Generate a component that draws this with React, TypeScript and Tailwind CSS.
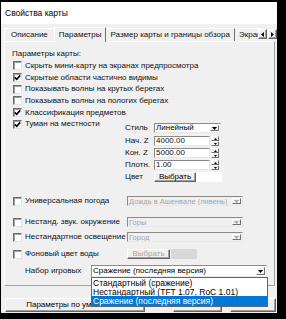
import React from "react";

// classic win32 bits
function Check({ checked }: { checked?: boolean }) {
  return (
    <span className="w-[9px] h-[9px] shrink-0 bg-white border border-t-[#6b6b6b] border-l-[#6b6b6b] border-b-[#e3e3e3] border-r-[#e3e3e3] shadow-[inset_1px_1px_0_#a0a0a0] flex items-center justify-center">
      {checked && (
        <svg width="7" height="7" viewBox="0 0 7 7">
          <path d="M0.8 3.4 L2.7 5.3 L6.2 1.4" stroke="#000" strokeWidth="1.6" fill="none" />
        </svg>
      )}
    </span>
  );
}

function Arrow({ disabled }: { disabled?: boolean }) {
  return (
    <span className="w-[9px] h-full shrink-0 bg-[#f0f0f0] border border-t-white border-l-white border-b-[#707070] border-r-[#707070] flex items-center justify-center">
      <svg width="5" height="3" viewBox="0 0 5 3">
        <path d="M0 0 H5 L2.5 3 Z" fill={disabled ? "#a8a8a8" : "#000"} />
      </svg>
    </span>
  );
}

function Select({ value, width, disabled, h = "h-[10px]" }: { value: string; width: string; disabled?: boolean; h?: string }) {
  return (
    <div
      className={`${width} ${h} flex items-stretch border border-t-[#8a8a8a] border-l-[#8a8a8a] border-b-[#e8e8e8] border-r-[#e8e8e8] ${
        disabled ? "bg-[#f0f0f0] text-[#a6a6a6] text-[7.5px]" : "bg-white text-black"
      }`}
    >
      <span className="flex-1 flex items-center pl-[1px] whitespace-nowrap overflow-hidden leading-none">{value}</span>
      <div className="p-[1px] flex">
        <Arrow disabled={disabled} />
      </div>
    </div>
  );
}

function Spin({ value }: { value: string }) {
  return (
    <div className="flex items-center gap-[1px] h-[10px]">
      <div className="w-[56px] h-full bg-white border border-t-[#8a8a8a] border-l-[#8a8a8a] border-b-[#e8e8e8] border-r-[#e8e8e8] flex items-center pl-[1px] leading-none">
        {value}
      </div>
      <div className="w-[8px] h-full flex flex-col">
        <span className="flex-1 bg-[#f0f0f0] border border-t-white border-l-white border-b-[#707070] border-r-[#707070] flex items-center justify-center">
          <svg width="3" height="2" viewBox="0 0 3 2">
            <path d="M0 2 H3 L1.5 0 Z" fill="#000" />
          </svg>
        </span>
        <span className="flex-1 bg-[#f0f0f0] border border-t-white border-l-white border-b-[#707070] border-r-[#707070] flex items-center justify-center">
          <svg width="3" height="2" viewBox="0 0 3 2">
            <path d="M0 0 H3 L1.5 2 Z" fill="#000" />
          </svg>
        </span>
      </div>
    </div>
  );
}

function Btn({ children, className = "", disabled }: { children?: React.ReactNode; className?: string; disabled?: boolean }) {
  return (
    <div
      className={`bg-[#f0f0f0] border border-t-white border-l-white border-b-[#646464] border-r-[#646464] shadow-[inset_-1px_-1px_0_#a0a0a0] flex items-center justify-center leading-none whitespace-nowrap ${
        disabled ? "text-[#a6a6a6]" : "text-black"
      } ${className}`}
    >
      {children}
    </div>
  );
}

function Row({ checked, label, h = "h-[11.7px]" }: { checked?: boolean; label: string; h?: string }) {
  return (
    <div className={`${h} flex items-center gap-[3px] pl-[8px]`}>
      <Check checked={checked} />
      <span className="whitespace-nowrap leading-none">{label}</span>
    </div>
  );
}

const checks = [
  { label: "Скрыть мини-карту на экранах предпросмотра", checked: false },
  { label: "Скрытые области частично видимы", checked: true },
  { label: "Показывать волны на крутых берегах", checked: false },
  { label: "Показывать волны на пологих берегах", checked: false },
  { label: "Классификация предметов", checked: true },
];

export default function App() {
  return (
    <div className="w-[286px] h-[319px] bg-black pt-[2px] pl-[1px] overflow-hidden font-['Liberation_Sans',Arial,sans-serif] text-[8px] text-[#111]">
      <div className="w-[276px] h-[311px] bg-[#f0f0f0] flex flex-col">
        {/* заголовок окна */}
        <div className="h-[22px] bg-white flex items-center pl-[4px] text-[8.5px] text-black">Свойства карты</div>

        {/* вкладки */}
        <div className="h-[17px] flex items-end pl-[3px] relative">
          <div className="h-[13px] flex items-center px-[6px] border-l border-t border-white">Описание</div>
          <div className="h-[15px] flex items-center px-[4px] bg-[#f0f0f0] border-l border-t border-white border-r border-r-[#6d6d6d] -mb-[1px] z-10">
            Параметры
          </div>
          <div className="h-[13px] flex items-center px-[4px] border-t border-white border-r border-r-[#6d6d6d]">
            Размер карты и границы обзора
          </div>
          <div className="h-[13px] flex items-center pl-[4px] w-[26px] overflow-hidden whitespace-nowrap border-t border-white">
            Экран
          </div>
          <div className="flex gap-[1px] mb-[2px] ml-[-3px]">
            <Btn className="w-[9px] h-[10px]">
              <svg width="3" height="5" viewBox="0 0 3 5">
                <path d="M3 0 V5 L0 2.5 Z" fill="#000" />
              </svg>
            </Btn>
            <Btn className="w-[9px] h-[10px]">
              <svg width="3" height="5" viewBox="0 0 3 5">
                <path d="M0 0 V5 L3 2.5 Z" fill="#000" />
              </svg>
            </Btn>
          </div>
        </div>

        {/* панель */}
        <div className="ml-[3px] w-[271px] h-[245px] border border-t-white border-l-white border-b-[#a0a0a0] border-r-[#a0a0a0] flex flex-col pt-[6px]">
          <div className="h-[12px] flex items-center pl-[7px] leading-none">Параметры карты:</div>
          {checks.map((c) => (
            <Row key={c.label} label={c.label} checked={c.checked} />
          ))}

          {/* туман */}
          <div className="flex items-start">
            <div className="w-[120px]">
              <Row checked label="Туман на местности" h="h-[12px]" />
            </div>
            <div className="mt-[5px] grid grid-cols-[29px_auto] gap-y-[2px] items-center">
              <span className="leading-none">Стиль</span>
              <Select value="Линейный" width="w-[67px]" />
              <span className="leading-none mt-[1px]">Нач. Z</span>
              <div className="mt-[1px]">
                <Spin value="4000.00" />
              </div>
              <span className="leading-none">Кон. Z</span>
              <Spin value="5000.00" />
              <span className="leading-none">Плотн.</span>
              <Spin value="1.00" />
              <span className="leading-none">Цвет</span>
              <div className="flex h-[10px]">
                <Btn className="w-[42px] h-full">Выбрать</Btn>
                <div className="w-[26px] h-full bg-white" />
              </div>
            </div>
          </div>

          <div className="flex items-center h-[10px] mt-[14px]">
            <div className="w-[122px]">
              <Row label="Универсальная погода" h="h-[10px]" />
            </div>
            <Select value="Дождь в Ашенвале (ливень)" width="w-[116px]" disabled />
          </div>
          <div className="flex items-center h-[10px] mt-[11px]">
            <div className="w-[122px]">
              <Row label="Нестанд. звук. окружение" h="h-[10px]" />
            </div>
            <Select value="Горы" width="w-[116px]" disabled />
          </div>
          <div className="flex items-center h-[10px] mt-[5px]">
            <div className="w-[122px]">
              <Row label="Нестандартное освещение" h="h-[10px]" />
            </div>
            <Select value="Город" width="w-[116px]" disabled />
          </div>
          <div className="flex items-center h-[10px] mt-[7px]">
            <div className="w-[122px]">
              <Row label="Фоновый цвет воды" h="h-[10px]" />
            </div>
            <Btn className="w-[43px] h-full" disabled>
              Выбрать
            </Btn>
            <div className="w-[26px] h-full bg-[#d8d8d8] ml-[1px]" />
          </div>

          <div className="flex items-center h-[12px] mt-[6px]">
            <span className="w-[86px] pl-[20px] leading-none whitespace-nowrap">Набор игровых</span>
            <div className="relative">
              <Select value="Сражение (последняя версия)" width="w-[176px]" h="h-[12px]" />
              <div className="absolute left-0 top-full w-[177px] h-[30px] bg-white border border-[#646464] z-20 flex flex-col text-[8.5px] text-black">
                <div className="h-[9px] flex items-center pl-[1px] leading-none">Стандартный (сражение)</div>
                <div className="h-[9px] flex items-center pl-[1px] leading-none">Нестандартный (TFT 1.07, RoC 1.01)</div>
                <div className="flex-1 flex items-center pl-[1px] leading-none bg-[#0078d7] text-white">
                  Сражение (последняя версия)
                </div>
              </div>
            </div>
          </div>
        </div>

        {/* кнопки внизу */}
        <div className="mt-[12px] h-[14px] flex items-stretch pl-[4px]">
          <Btn className="w-[140px]">Параметры по умолчанию</Btn>
          <Btn className="w-[49px] ml-[28px]">OK</Btn>
          <Btn className="w-[46px] ml-[8px]">Отмена</Btn>
        </div>
      </div>
    </div>
  );
}
